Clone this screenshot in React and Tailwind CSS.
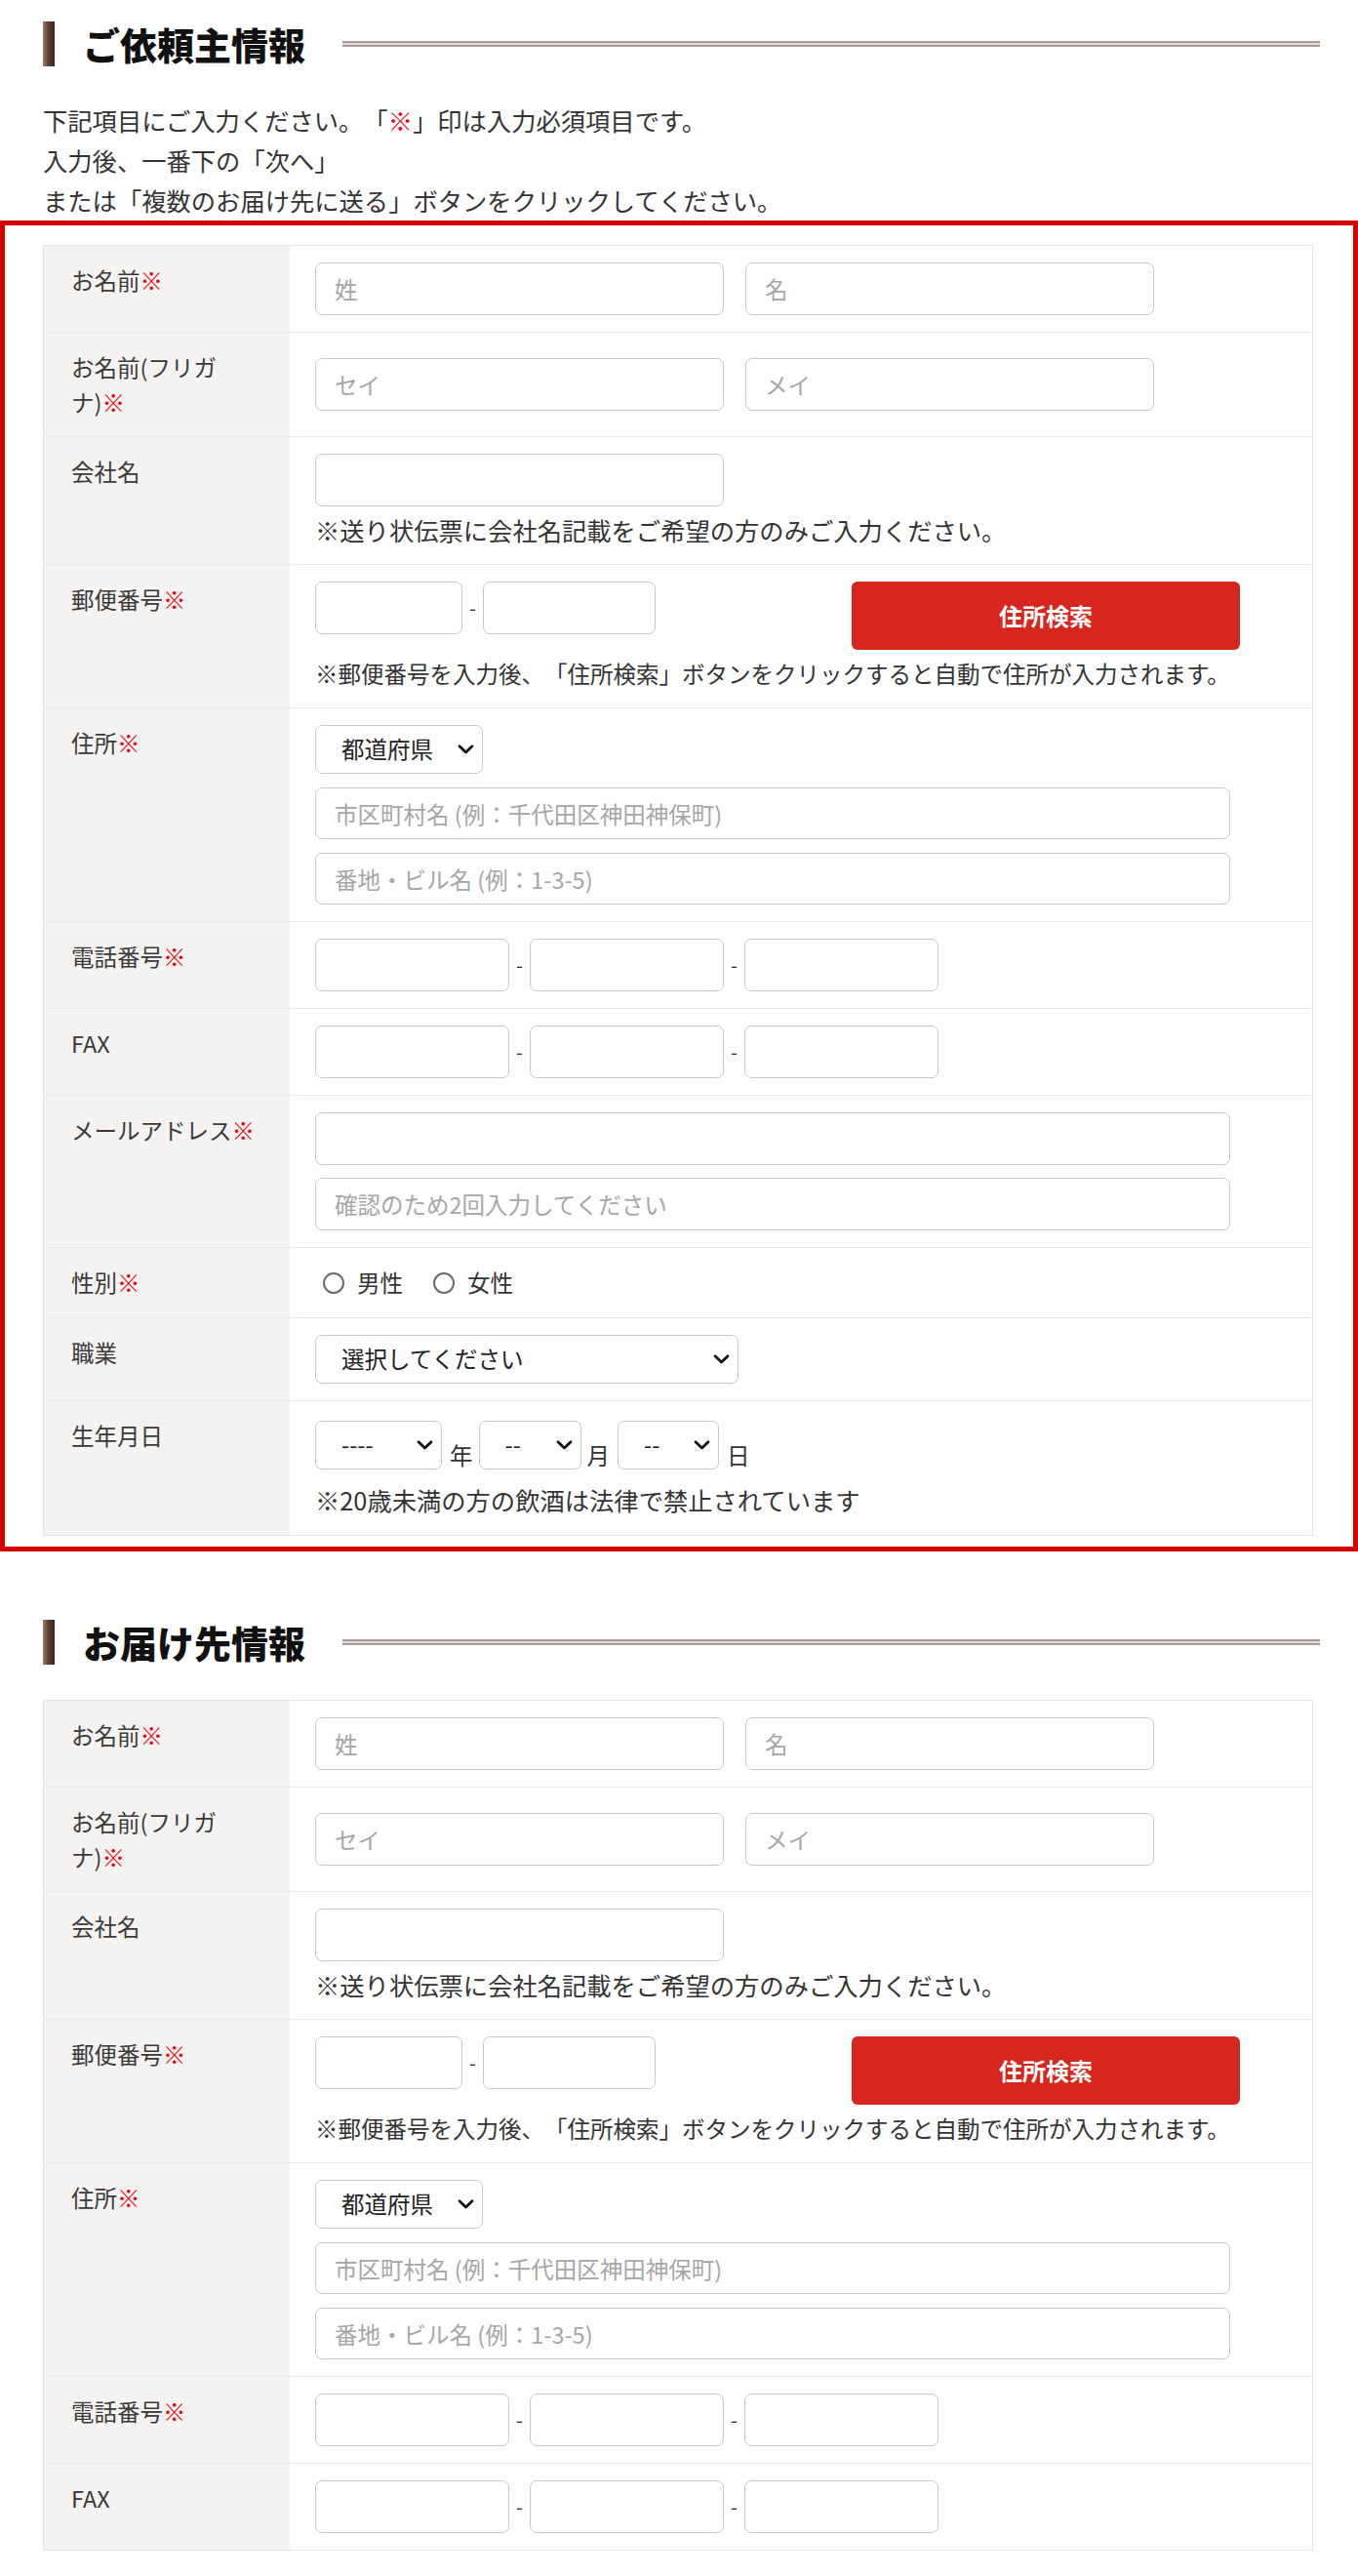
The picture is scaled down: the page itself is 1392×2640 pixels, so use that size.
import React from 'react';

const Req = () => <span className="text-[#e60012]">※</span>;

const Chevron = () => (
  <svg
    className="pointer-events-none absolute right-[9px] top-1/2 -translate-y-1/2"
    width="17"
    height="11"
    viewBox="0 0 17 11"
    fill="none"
  >
    <path d="M2 2.2l6.5 6.3 6.5-6.3" stroke="#111" strokeWidth="2.8" strokeLinecap="round" strokeLinejoin="round" />
  </svg>
);

const Input = ({ w, placeholder, h = 'h-[54px]' }) => (
  <input
    type="text"
    placeholder={placeholder}
    className={`${w} ${h} shrink-0 rounded-[7px] border-[1.5px] border-[#c9c9c9] bg-white px-[19px] text-[23.5px] text-[#333] outline-none placeholder:text-[#a6a6a6]`}
  />
);

const Select = ({ w, value }) => (
  <div className={`relative ${w} h-[50px] shrink-0`}>
    <select
      className="h-full w-full appearance-none rounded-[7px] border-[1.5px] border-[#c9c9c9] bg-white pl-[26px] text-[23.5px] text-[#222] outline-none"
      defaultValue={value}
    >
      <option>{value}</option>
    </select>
    <Chevron />
  </div>
);

const Dash = () => <span className="w-[21px] shrink-0 text-center text-[20px] text-[#333]">-</span>;

// notes under the inputs
const Note = ({ children, className = 'mt-[6px] text-[25.3px]' }) => (
  <p className={`${className} leading-[36px] text-[#333]`}>{children}</p>
);

const Row = ({ label, children, last, dataClass = 'py-[17px]' }) => (
  <div className={`flex ${last ? '' : 'border-b border-[#ebe9e6]'}`}>
    <div className="w-[252px] shrink-0 bg-[#f4f3f1] py-[17px] pl-[28px] pr-[20px] text-[23.5px] leading-[36px] text-[#3a3a3a]">
      {label}
    </div>
    <div className={`flex flex-1 flex-col justify-center bg-white px-[26px] ${dataClass}`}>{children}</div>
  </div>
);

const Heading = ({ children }) => (
  <div className="flex h-[46px] w-[1309px] items-center">
    <div className="h-[46px] w-[12px] shrink-0 bg-linear-to-r from-[#9c7e70] via-[#5b3b2b] to-[#3d2416]" />
    <h2 className="ml-[29px] shrink-0 text-[38px] font-black leading-none text-[#111]">{children}</h2>
    <div className="ml-[38px] h-[6px] flex-1 border-y-2 border-[#a89b98] bg-[#e2dbd9]" />
  </div>
);

const NameRows = () => (
  <>
    <Row label={<>お名前<Req /></>}>
      <div className="flex gap-[22px]">
        <Input w="w-[419px]" placeholder="姓" />
        <Input w="w-[419px]" placeholder="名" />
      </div>
    </Row>
    <Row label={<>お名前(フリガ<br />ナ)<Req /></>}>
      <div className="flex gap-[22px]">
        <Input w="w-[419px]" placeholder="セイ" />
        <Input w="w-[419px]" placeholder="メイ" />
      </div>
    </Row>
    <Row label="会社名">
      <Input w="w-[419px]" />
      <Note>※送り状伝票に会社名記載をご希望の方のみご入力ください。</Note>
    </Row>
    <Row label={<>郵便番号<Req /></>}>
      <div className="flex items-start">
        <div className="flex items-center">
          <Input w="w-[151px]" />
          <Dash />
          <Input w="w-[177px]" />
        </div>
        <button className="ml-[201px] h-[70px] w-[398px] rounded-[6px] bg-[#d6261e] text-[24px] font-bold text-white">
          住所検索
        </button>
      </div>
      <Note className="mt-[6px] text-[23.5px]">
        ※郵便番号を入力後、「住所検索」ボタンをクリックすると自動で住所が入力されます。
      </Note>
    </Row>
    <Row label={<>住所<Req /></>}>
      <div className="flex flex-col gap-[14px]">
        <Select w="w-[172px]" value="都道府県" />
        <Input w="w-[938px]" h="h-[53px]" placeholder="市区町村名 (例：千代田区神田神保町)" />
        <Input w="w-[938px]" h="h-[53px]" placeholder="番地・ビル名 (例：1-3-5)" />
      </div>
    </Row>
  </>
);

const PhoneRow = ({ label, last }) => (
  <Row label={label} last={last}>
    <div className="flex items-center">
      <Input w="w-[199px]" />
      <Dash />
      <Input w="w-[199px]" />
      <Dash />
      <Input w="w-[199px]" />
    </div>
  </Row>
);

const Radio = ({ label }) => (
  <label className="flex items-center">
    <span className="h-[22px] w-[22px] shrink-0 rounded-full border-2 border-[#6b6b6b] bg-white" />
    <span className="ml-[13px] text-[23.5px] text-[#333]">{label}</span>
  </label>
);

const App = () => {
  return (
    <div className="min-h-[2640px] w-[1392px] bg-white pt-[22px] font-['Noto_Sans_CJK_JP','Noto_Sans',sans-serif] text-[#333] [text-spacing-trim:space-all]">
      {/* ご依頼主情報 */}
      <div className="pl-[44px]">
        <Heading>ご依頼主情報</Heading>
        <div className="mt-[35px] text-[25.3px] leading-[41px] text-[#333]">
          <p>
            下記項目にご入力ください。「<Req />」印は入力必須項目です。
          </p>
          <p>入力後、一番下の「次へ」</p>
          <p>または「複数のお届け先に送る」ボタンをクリックしてください。</p>
        </div>
      </div>

      <div className="border-[5px] border-[#d40000] pb-[11px] pl-[39px] pr-[41px] pt-[20px]">
        <div className="border border-[#e6e4e1]">
          <NameRows />
          <PhoneRow label={<>電話番号<Req /></>} />
          <PhoneRow label="FAX" />
          <Row label={<>メールアドレス<Req /></>}>
            <div className="flex flex-col gap-[13px]">
              <Input w="w-[938px]" />
              <Input w="w-[938px]" placeholder="確認のため2回入力してください" />
            </div>
          </Row>
          <Row label={<>性別<Req /></>}>
            <div className="ml-[8px] flex h-[37px] items-center gap-[31px]">
              <Radio label="男性" />
              <Radio label="女性" />
            </div>
          </Row>
          <Row label="職業">
            <Select w="w-[434px]" value="選択してください" />
          </Row>
          <Row label="生年月日" last dataClass="pt-[20px] pb-[18px]">
            <div className="flex items-end">
              <Select w="w-[130px]" value="----" />
              <span className="ml-[8px] mr-[6px] text-[23.5px] leading-[30px]">年</span>
              <Select w="w-[105px]" value="--" />
              <span className="ml-[6px] mr-[8px] text-[23.5px] leading-[30px]">月</span>
              <Select w="w-[104px]" value="--" />
              <span className="ml-[8px] text-[23.5px] leading-[30px]">日</span>
            </div>
            <Note className="mt-[13px] text-[25.3px]">※20歳未満の方の飲酒は法律で禁止されています</Note>
          </Row>
        </div>
      </div>

      {/* お届け先情報 */}
      <div className="mt-[70px] pl-[44px]">
        <Heading>お届け先情報</Heading>
        <div className="mt-[36px] w-[1302px] border border-[#e6e4e1]">
          <NameRows />
          <PhoneRow label={<>電話番号<Req /></>} />
          <PhoneRow label="FAX" last />
        </div>
      </div>
    </div>
  );
};

export default App;
